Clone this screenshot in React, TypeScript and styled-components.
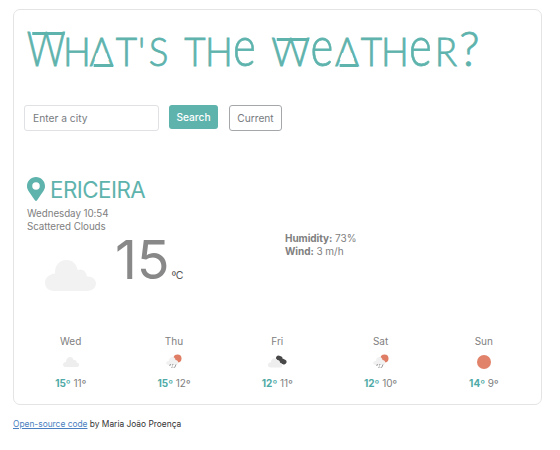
import React from "react";
import styled, { createGlobalStyle, css } from "styled-components";

const teal = "#5eb3ad";

const GlobalStyle = createGlobalStyle`
  *, *::before, *::after { box-sizing: border-box; }
  body {
    margin: 0;
    background: #fff;
    color: #808080;
    font-family: Inter, "Liberation Sans", sans-serif;
    font-size: 10px;
  }
`;

const Page = styled.div`
  width: 560px;
  height: 450px;
  padding: 9px 18px 0 13px;
  overflow: hidden;
`;

const Card = styled.main`
  height: 396px;
  border: 1px solid #e4e4e4;
  border-radius: 7px;
  padding: 8px 0 0 10px;
`;

const Title = styled.h1`
  margin: -1px 0 0 2px;
  height: 88px;
  display: flex;
  align-items: baseline;
  color: ${teal};
  font-family: Lato, sans-serif;
  font-weight: 300;
  font-size: 40px;
  line-height: 56px;
  white-space: pre;
`;

type Shape = "small" | "large" | "tall" | "round" | "topBar" | "baseBar";

const letterShapes = {
  small: css`transform: scaleX(0.92);`,
  tall: css`font-size: 47px;`,
  round: css`font-size: 56px; transform: scaleX(0.78);`,
  large: css`
    font-size: 47px;
    transform: scaleX(0.81);
    &::after { top: 12px; left: 3px; right: -3px; }
  `,
  topBar: css`
    transform: scaleX(0.95);
    &::after { top: 15px; left: 5px; right: 0; }
  `,
  baseBar: css`
    transform: scaleX(0.92);
    &::before {
      content: "";
      position: absolute;
      bottom: 19px;
      left: calc(50% - 8px);
      width: 16px;
      height: 7px;
      background: #fff;
      clip-path: polygon(18% 0, 82% 0, 100% 100%, 0 100%);
    }
    &::after { bottom: 12.5px; left: 5px; right: 1px; }
  `,
};

const Letter = styled.span<{ $width: number; $shape: Shape }>`
  position: relative;
  flex: none;
  display: flex;
  justify-content: center;
  width: ${(p) => p.$width}px;
  text-transform: ${(p) => (p.$shape === "round" ? "none" : "uppercase")};
  -webkit-text-stroke: 0.8px ${teal};
  ${(p) =>
    ["large", "topBar", "baseBar"].includes(p.$shape) &&
    css`
      &::after {
        content: "";
        position: absolute;
        height: 2.5px;
        background: ${teal};
      }
    `}
  ${(p) => letterShapes[p.$shape]}
`;

const Form = styled.form`
  display: flex;
  align-items: flex-start;
  height: 71px;
`;

const CityInput = styled.input`
  width: 135px;
  height: 26px;
  padding: 0 8px;
  border: 1px solid #dfe1e4;
  border-radius: 3px;
  font: 10.25px Inter, sans-serif;
  outline: none;
  &::placeholder { color: #777b80; opacity: 1; }
`;

const Button = styled.button<{ $filled?: boolean }>`
  width: ${(p) => (p.$filled ? 49 : 53)}px;
  height: ${(p) => (p.$filled ? 24 : 26)}px;
  margin-left: 10px;
  margin-right: ${(p) => (p.$filled ? 1 : 0)}px;
  padding: 0;
  border: ${(p) => (p.$filled ? "0" : "1px solid #a5a8aa")};
  border-radius: 3px;
  background: ${(p) => (p.$filled ? teal : "#fff")};
  color: ${(p) => (p.$filled ? "#fff" : "#777b80")};
  font: ${(p) => (p.$filled ? 500 : 400)} 10.2px Inter, sans-serif;
`;

const City = styled.h2`
  display: flex;
  align-items: center;
  gap: 5px;
  height: 26px;
  margin: 0 0 6px 3px;
  color: ${teal};
  font-size: 22.4px;
  font-weight: 400;
  letter-spacing: -0.55px;
`;

const Columns = styled.section`
  display: grid;
  grid-template-columns: 259px 1fr;
  height: 127px;
`;

const Conditions = styled.div`
  padding-left: 3px;
  font-size: 9.8px;
  line-height: 12.5px;
  letter-spacing: -0.06px;
`;

const Readings = styled.div`
  padding: 24px 0 0 2px;
  line-height: 12.5px;
  letter-spacing: -0.05px;
`;

const Current = styled.div`
  display: flex;
  align-items: flex-start;
  padding: 2px 0 0 21px;
`;

const BigCloud = styled.div`
  width: 53px;
  padding-top: 25px;
`;

const Temperature = styled.div`
  display: flex;
  align-items: baseline;
  margin-left: 17px;
  line-height: 50px;
`;

const Degrees = styled.span`
  font-size: 54px;
  letter-spacing: -0.2px;
  color: #888;
`;

const Unit = styled.span`
  margin-left: 2px;
  font-size: 10.5px;
  color: #555;
  letter-spacing: -0.5px;
`;

const Forecast = styled.section`
  display: grid;
  grid-template-columns: repeat(5, 103.3px);
  margin-left: -5px;
`;

const Day = styled.div`
  display: flex;
  flex-direction: column;
  align-items: center;
  line-height: 13px;

  svg { margin: 5px 0 6px; }
`;

const High = styled.b`
  color: #4eaaa6;
  font-weight: 700;
`;

const Footer = styled.footer`
  margin-top: 13px;
  font-size: 8.4px;
  line-height: 13px;
  color: #333;
`;

const Link = styled.a`
  color: #4a7fc1;
  text-decoration: underline;
`;

const titleLetters: [string, number, Shape][] = [
  ["W", 40, "large"], ["h", 22, "small"], ["a", 27, "baseBar"], ["t", 23, "small"],
  ["'", 7, "small"], ["s", 27, "small"], [" ", 11, "small"],
  ["t", 24, "small"], ["h", 24, "small"], ["e", 27, "round"], [" ", 13, "small"],
  ["w", 39, "topBar"], ["e", 24, "round"], ["a", 26, "baseBar"], ["t", 23, "small"],
  ["h", 24, "small"], ["e", 27, "round"], ["r", 24, "small"], ["?", 23, "tall"],
];

const Cloud = ({ width, height }: { width: number; height: number }) => (
  <svg width={width} height={height} viewBox="0 0 50 31" preserveAspectRatio="none">
    <path fill="#f2f2f2" d="M9 31C3 31 0 27 0 22.500C0 18 4 14 10 13.500C9 6 14 0 21 0C27 0 31 4 32 10C37 8 41 12 41 16.500C46 16 50 19 50 23.500C50 28 46 31 41 31Z" />
  </svg>
);

const Pin = () => (
  <svg width="18" height="24" viewBox="0 0 384 512">
    <path fill={teal} d="M172 502C27 291 0 269 0 192C0 86 86 0 192 0s192 86 192 192c0 77-27 99-172 310-10 13-30 13-40 0zM192 272a80 80 0 1 0 0-160 80 80 0 0 0 0 160z" />
  </svg>
);

const WeatherIcon = ({ kind }: { kind: string }) => {
  if (kind === "cloud") {
    return (
      <svg width="18" height="18" viewBox="0 0 18 18">
        <path fill="#eeeeee" d="M4 14C-.2 14 .2 9.200 4 9C4 2.800 11 2.500 11.500 7C14 6.500 15 8 14.500 9.500C18.200 9.500 17.500 14 15 14Z" />
      </svg>
    );
  }
  if (kind === "dark") {
    return (
      <svg width="20" height="18" viewBox="0 0 20 18">
        <path fill="none" stroke="#484848" strokeWidth="5" strokeLinecap="round" d="M11.500 5L13 5.500M15 8L17 9" />
        <path fill="#eeeeee" d="M4 14.500C-.5 14.500 0 9.500 4 9.200C4 4.500 9 4 10.500 7.300C12 7.500 13 8.700 13 10C16 10 16 14.500 13.500 14.500Z" />
      </svg>
    );
  }
  if (kind === "rain") {
    return (
      <svg width="18" height="18" viewBox="0 0 18 18">
        <circle cx="12.500" cy="5.500" r="4" fill="#df7d65" />
        <path fill="#f1f1f1" d="M4 12C0 12 .5 8 4 7.800C4 2.500 10.500 3 10.500 7C14 7 14 12 11 12Z" />
        <path fill="none" stroke="#8b8b8b" strokeWidth="0.900" d="M5.500 11l-.8 2M8 11l-.6 1.500M11 11.500l-1.200 2.800M7.300 13.500l-.6 1.500M9.300 14l-.3 1" />
      </svg>
    );
  }
  return (
    <svg width="18" height="18" viewBox="0 0 18 18">
      <circle cx="9" cy="9" r="7" fill="#e1826a" />
    </svg>
  );
};

const days = [
  { name: "Wed", icon: "cloud", high: 15, low: 11 },
  { name: "Thu", icon: "rain", high: 15, low: 12 },
  { name: "Fri", icon: "dark", high: 12, low: 11 },
  { name: "Sat", icon: "rain", high: 12, low: 10 },
  { name: "Sun", icon: "sun", high: 14, low: 9 },
];

export default function App() {
  return (
    <Page>
      <GlobalStyle />
      <Card>
        <Title>
          {titleLetters.map(([letter, width, shape], i) => (
            <Letter key={i} $width={width} $shape={shape}>{letter}</Letter>
          ))}
        </Title>
        <Form onSubmit={(e) => e.preventDefault()}>
          <CityInput placeholder="Enter a city" />
          <Button $filled type="submit">Search</Button>
          <Button type="button">Current</Button>
        </Form>
        <City><Pin />ERICEIRA</City>
        <Columns>
          <div>
            <Conditions>
              <div>Wednesday 10:54</div>
              <div>Scattered Clouds</div>
            </Conditions>
            <Current>
              <BigCloud><Cloud width={51} height={31} /></BigCloud>
              <Temperature><Degrees>15</Degrees><Unit>ºC</Unit></Temperature>
            </Current>
          </div>
          <Readings>
            <div><b>Humidity:</b> 73%</div>
            <div><b>Wind:</b> 3 m/h</div>
          </Readings>
        </Columns>
        <Forecast>
          {days.map((day) => (
            <Day key={day.name}>
              <div>{day.name}</div>
              <WeatherIcon kind={day.icon} />
              <div><High>{day.high}º</High> {day.low}º</div>
            </Day>
          ))}
        </Forecast>
      </Card>
      <Footer><Link href="#">Open-source code</Link> by Maria João Proença</Footer>
    </Page>
  );
}
